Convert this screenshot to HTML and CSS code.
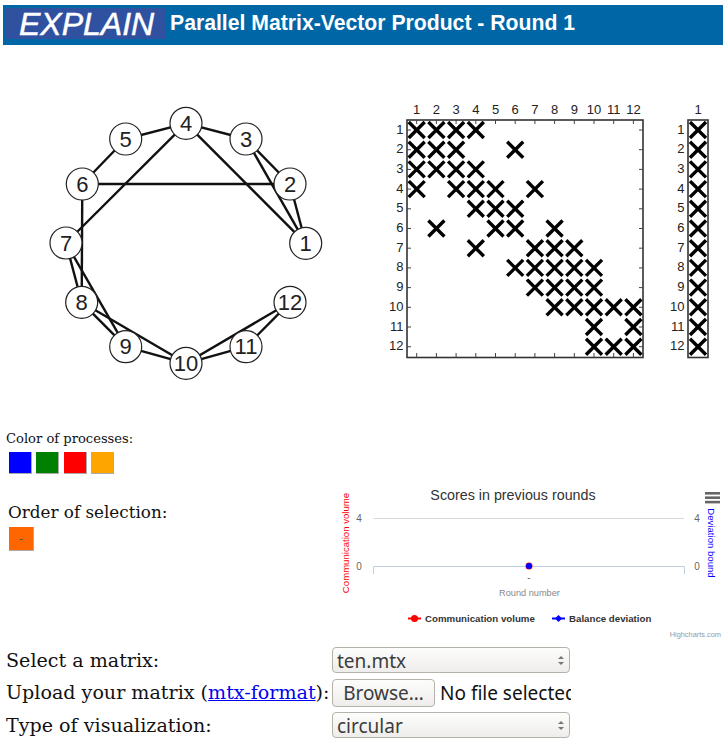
FILE: index.html
```html
<!DOCTYPE html>
<html lang="en">
<head>
    <meta charset="UTF-8">
    <meta name="viewport" content="width=device-width, initial-scale=1.0">
    <title>Parallel Matrix-Vector Product</title>
    <link rel="stylesheet" href="styles.css">
</head>
<body>
    <header class="topbar">
        <div class="logo">EXPLAIN</div>
        <h1>Parallel Matrix-Vector Product - Round 1</h1>
    </header>

    <section class="figures">
        <svg id="graph" class="graph" width="300" height="295" viewBox="40 95 300 295"></svg>
        <svg id="matrix" class="matrix" width="333" height="295" viewBox="390 95 333 295"></svg>
    </section>

    <section class="controls">
        <div class="legend-col">
            <p class="colors-label">Color of processes:</p>
            <div class="swatches">
                <button class="swatch blue"></button>
                <button class="swatch green"></button>
                <button class="swatch red"></button>
                <button class="swatch orange"></button>
            </div>
            <p class="order-label">Order of selection:</p>
            <button class="order-tile">-</button>
        </div>

        <svg class="chart" width="388" height="165" viewBox="335 480 388 165">
            <text class="chart-title" x="513" y="500">Scores in previous rounds</text>
            <g class="menu-icon">
                <rect x="705" y="492" width="15" height="2.6"></rect>
                <rect x="705" y="496.4" width="15" height="2.6"></rect>
                <rect x="705" y="500.8" width="15" height="2.6"></rect>
            </g>
            <line class="grid-line" x1="373.5" y1="518.5" x2="684" y2="518.5"></line>
            <path class="axis-line" d="M373.5 574V566.5H684.5V574"></path>
            <text class="tick" x="359" y="522">4</text>
            <text class="tick" x="359" y="570">0</text>
            <text class="tick" x="697" y="522">4</text>
            <text class="tick" x="697" y="570">0</text>
            <text class="axis-red" transform="translate(349 543) rotate(-90)">Communication volume</text>
            <text class="axis-blue" transform="translate(708 543) rotate(90)">Deviation bound</text>
            <text class="tick" x="529" y="581">-</text>
            <text class="axis-x" x="529.5" y="596">Round number</text>
            <circle cx="529" cy="566" r="3.5" fill="#f00"></circle>
            <circle cx="529" cy="566" r="3" fill="#00f"></circle>
            <line x1="408" y1="618.5" x2="421" y2="618.5" stroke="#f00" stroke-width="2"></line>
            <circle cx="414.5" cy="618.5" r="3.5" fill="#f00"></circle>
            <text class="legend-text" x="425" y="622">Communication volume</text>
            <line x1="552" y1="618.5" x2="565" y2="618.5" stroke="#00f" stroke-width="2"></line>
            <path d="M558.5 615L562 618.5L558.5 622L555 618.5Z" fill="#00f"></path>
            <text class="legend-text" x="569" y="622">Balance deviation</text>
            <text class="credits" x="721" y="637">Highcharts.com</text>
        </svg>
    </section>

    <form class="options" onsubmit="event.preventDefault();">
        <label for="matrix_file">Select a matrix:</label>
        <div class="select-box">
            <select id="matrix_file">
                <option>ten.mtx</option>
            </select>
        </div>
        <label for="upload">Upload your matrix (<a href="#">mtx-format</a>):</label>
        <div class="file-box">
            <button type="button" id="upload" class="browse">Browse…</button>
            <span class="file-name">No file selected</span>
        </div>
        <label for="vis_type">Type of visualization:</label>
        <div class="select-box">
            <select id="vis_type">
                <option>circular</option>
            </select>
        </div>
    </form>

    <script src="script.js"></script>
</body>
</html>
```

FILE: styles.css
```css
html, body {
    height: 744px;
    overflow: hidden;
}
body {
    margin: 5px 2px 0 3px;
    font-family: "DejaVu Serif", serif;
    background-color: white;
    color: #111;
}
.topbar {
    display: flex;
    align-items: flex-start;
    height: 40px;
    padding: 3px 0 0 3px;
    box-sizing: border-box;
    background-color: #0066a6;
}
.logo {
    width: 160px;
    height: 31px;
    padding-left: 13px;
    box-sizing: border-box;
    background-color: #3050a0;
    color: white;
    font: italic 32px/32px "Liberation Sans", sans-serif;
    -webkit-text-stroke: 0.5px white;
}
.topbar h1 {
    margin: 0 0 0 4px;
    color: white;
    font: bold 21.2px/30px "Liberation Sans", sans-serif;
}
.figures {
    display: flex;
    gap: 50px;
    margin-top: 50px;
    padding-left: 37px;
}
.graph line, .matrix .tickmark {
    stroke: #111;
}
.graph line {
    stroke-width: 2.4;
}
.graph circle {
    fill: white;
    stroke: #222;
    stroke-width: 1.2;
}
.graph text {
    font: 22px "Liberation Sans", sans-serif;
    fill: #222;
    text-anchor: middle;
}
.matrix text {
    font: 13px "Liberation Sans", sans-serif;
    fill: #222;
}
.matrix .col-label {
    text-anchor: middle;
}
.matrix .row-label {
    text-anchor: end;
}
.matrix .frame {
    fill: white;
    stroke: #333;
    stroke-width: 1.6;
}
.matrix .tickmark {
    stroke: #444;
    stroke-width: 1;
}
.matrix .cross {
    stroke: #000;
    stroke-width: 3.4;
    stroke-linecap: square;
}
.controls {
    display: flex;
    height: 257px;
}
.legend-col {
    width: 332px;
    flex: none;
}
.colors-label {
    margin: 41px 0 0 3px;
    font-size: 13.1px;
    line-height: 16px;
}
.swatches {
    display: flex;
    gap: 4.3px;
    margin: 5px 0 0 6px;
}
.swatch {
    width: 23px;
    height: 22px;
    padding: 0;
    border: none;
    border-right: 1px solid #aaa;
    border-bottom: 1px solid #aaa;
}
.blue { background-color: #00f; }
.green { background-color: #008000; }
.red { background-color: #f00; }
.orange { background-color: #ffa500; }
.order-label {
    margin: 27px 0 0 5px;
    font-size: 16.8px;
    line-height: 22px;
}
.order-tile {
    display: block;
    width: 25px;
    height: 24px;
    margin: 4px 0 0 6px;
    padding: 0;
    border: none;
    border-right: 1px solid #aaa;
    border-bottom: 1px solid #aaa;
    background-color: #ff6600;
    color: #555;
    font: 13px "DejaVu Serif", serif;
}
.chart {
    flex: none;
    margin-top: 90px;
}
.chart text {
    font-family: "Liberation Sans", sans-serif;
}
.chart-title {
    font-size: 14.3px;
    fill: #333;
    text-anchor: middle;
}
.menu-icon rect {
    fill: #666;
}
.grid-line {
    stroke: #d8d8d8;
}
.axis-line {
    fill: none;
    stroke: #c0d0e0;
}
.tick {
    font-size: 10px;
    fill: #666;
    text-anchor: middle;
}
.axis-red, .axis-blue {
    font-size: 9.6px;
    text-anchor: middle;
}
.axis-red { fill: #f00; }
.axis-blue { fill: #00f; }
.axis-x {
    font-size: 9.2px;
    fill: #888;
    text-anchor: middle;
}
.legend-text {
    font-size: 9.7px;
    font-weight: bold;
    fill: #333;
}
.credits {
    font-size: 7.4px;
    fill: #999;
    text-anchor: end;
}
.options {
    display: grid;
    grid-template-columns: 326px 240px;
    row-gap: 5.5px;
    margin: 0 0 0 3px;
    align-items: center;
    font-size: 19.1px;
}
.options a {
    color: #00e;
}
.select-box {
    position: relative;
    height: 26px;
}
.select-box select {
    width: 238px;
    height: 26px;
    padding: 0 20px 0 4px;
    border: 1px solid #b5b2ac;
    border-radius: 4px;
    appearance: none;
    background: linear-gradient(#fdfdfc, #eeedeb);
    color: #3c3c3c;
    font: 19px "Noto Sans", sans-serif;
}
.select-box::before, .select-box::after {
    content: "";
    position: absolute;
    left: 226px;
    border-left: 3px solid transparent;
    border-right: 3px solid transparent;
    pointer-events: none;
}
.select-box::before {
    top: 9px;
    border-bottom: 3px solid #777;
}
.select-box::after {
    top: 15px;
    border-top: 3px solid #777;
}
.file-box {
    display: flex;
    align-items: center;
    width: 239px;
    overflow: hidden;
}
.browse {
    flex: none;
    width: 103px;
    height: 28px;
    padding: 0;
    border: 1px solid #b5b2ac;
    border-radius: 4px;
    background: linear-gradient(#fdfdfc, #eeedeb);
    color: #3c3c3c;
    font: 19px "Noto Sans", sans-serif;
}
.file-name {
    margin-left: 5px;
    white-space: nowrap;
    color: #111;
    font: 19px "Noto Sans", sans-serif;
}
```

FILE: script.js
```js
const NS = "http://www.w3.org/2000/svg";

function add(parent, tag, attrs, text) {
    let el = document.createElementNS(NS, tag);
    for (let key in attrs) el.setAttribute(key, attrs[key]);
    if (text !== undefined) el.textContent = text;
    parent.appendChild(el);
    return el;
}

// node positions of the circular layout
const nodes = [
    [305.7, 243.3], [290, 184], [246, 139], [186, 123.3],
    [125.7, 139], [82.3, 184], [66, 243], [81.7, 302.3],
    [125.7, 346.7], [186, 363.3], [246, 346.7], [290, 302.3]
];

// nonzero columns of each row (1-based)
const rows = [
    [1, 2, 3, 4], [1, 2, 3, 6], [1, 2, 3, 4], [1, 3, 4, 5, 7],
    [4, 5, 6], [2, 5, 6, 8], [4, 7, 8, 9], [6, 7, 8, 9, 10],
    [7, 8, 9, 10], [8, 9, 10, 11, 12], [10, 12], [10, 11, 12]
];

function drawGraph() {
    let svg = document.getElementById("graph");
    rows.forEach((cols, i) => {
        cols.forEach(c => {
            if (c - 1 <= i) return;
            let a = nodes[i], b = nodes[c - 1];
            add(svg, "line", { x1: a[0], y1: a[1], x2: b[0], y2: b[1] });
        });
    });
    nodes.forEach((n, i) => {
        add(svg, "circle", { cx: n[0], cy: n[1], r: 16 });
        add(svg, "text", { x: n[0], y: n[1] + 7.5 }, i + 1);
    });
}

const colX = i => 416.7 + i * 19.7;
const rowY = i => 130 + i * 19.7;

function cross(svg, x, y) {
    let s = 6.8;
    add(svg, "line", { class: "cross", x1: x - s, y1: y - s, x2: x + s, y2: y + s });
    add(svg, "line", { class: "cross", x1: x - s, y1: y + s, x2: x + s, y2: y - s });
}

function drawMatrix() {
    let svg = document.getElementById("matrix");
    add(svg, "rect", { class: "frame", x: 407, y: 120, width: 236, height: 237.5 });
    for (let i = 0; i < 12; i++) {
        let x = colX(i), y = rowY(i);
        add(svg, "line", { class: "tickmark", x1: x, y1: 120, x2: x, y2: 124 });
        add(svg, "line", { class: "tickmark", x1: x, y1: 353, x2: x, y2: 357 });
        add(svg, "line", { class: "tickmark", x1: 407, y1: y, x2: 411, y2: y });
        add(svg, "line", { class: "tickmark", x1: 639, y1: y, x2: 643, y2: y });
        add(svg, "text", { class: "col-label", x: x, y: 114 }, i + 1);
        add(svg, "text", { class: "row-label", x: 403.5, y: y + 3.5 }, i + 1);
    }
    rows.forEach((cols, i) => cols.forEach(c => cross(svg, colX(c - 1), rowY(i))));

    // the vector beside the matrix
    add(svg, "rect", { class: "frame", x: 688, y: 120, width: 20, height: 237.5 });
    add(svg, "text", { class: "col-label", x: 698, y: 114 }, 1);
    for (let i = 0; i < 12; i++) {
        add(svg, "text", { class: "row-label", x: 684.5, y: rowY(i) + 3.5 }, i + 1);
        cross(svg, 698, rowY(i));
    }
}

drawGraph();
drawMatrix();
```
